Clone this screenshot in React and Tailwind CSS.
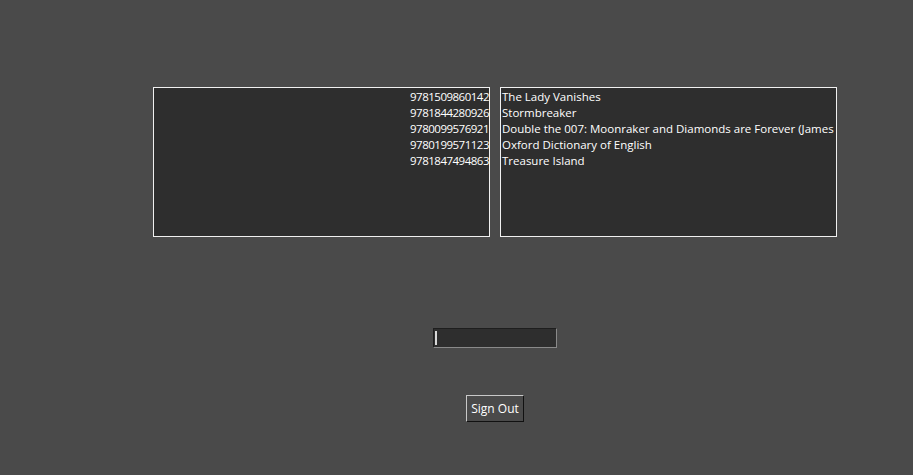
const isbns = ['9781509860142', '9781844280926', '9780099576921', '9780199571123', '9781847494863'];
const titles = [
  'The Lady Vanishes',
  'Stormbreaker',
  'Double the 007: Moonraker and Diamonds are Forever (James Bond)',
  'Oxford Dictionary of English',
  'Treasure Island',
];

const font = { fontFamily: '"Open Sans", "Noto Sans", sans-serif' };

export default function App() {
  return (
    <div className="w-[913px] h-[475px] bg-[#4a4a4a] overflow-hidden text-[11.5px] text-white" style={font}>
      <div className="ml-[153px] w-[684px] pt-[87px] flex flex-col items-center">
        <div className="flex gap-[10px]">
          <div className="w-[337px] h-[150px] border border-[#f0f0f0] bg-[#2e2e2e] overflow-hidden pt-[1px]">
            {isbns.map((n) => (
              <div key={n} className="h-[16px] leading-[16px] text-right whitespace-nowrap tracking-[-0.5px]">{n}</div>
            ))}
          </div>
          <div className="w-[337px] h-[150px] border border-[#f0f0f0] bg-[#2e2e2e] overflow-hidden pt-[1px] pl-[1px]">
            {titles.map((t) => (
              <div key={t} className="h-[16px] leading-[16px] whitespace-nowrap">{t}</div>
            ))}
          </div>
        </div>
        <div className="mt-[91px] w-[124px] h-[20px] bg-[#2e2e2e] border border-t-[#1e1e1e] border-l-[#1e1e1e] border-r-[#8a8a8a] border-b-[#8a8a8a] flex items-center pl-[1px]">
          <div className="w-[2px] h-[14px] bg-[#d8d8d8]" />
        </div>
        <button className="mt-[47px] w-[58px] h-[27px] bg-[#4a4a4a] border border-t-[#c8c8c8] border-l-[#c8c8c8] border-r-[#111111] border-b-[#111111] text-[12px] text-white leading-none" style={font}>
          Sign Out
        </button>
      </div>
    </div>
  );
}
